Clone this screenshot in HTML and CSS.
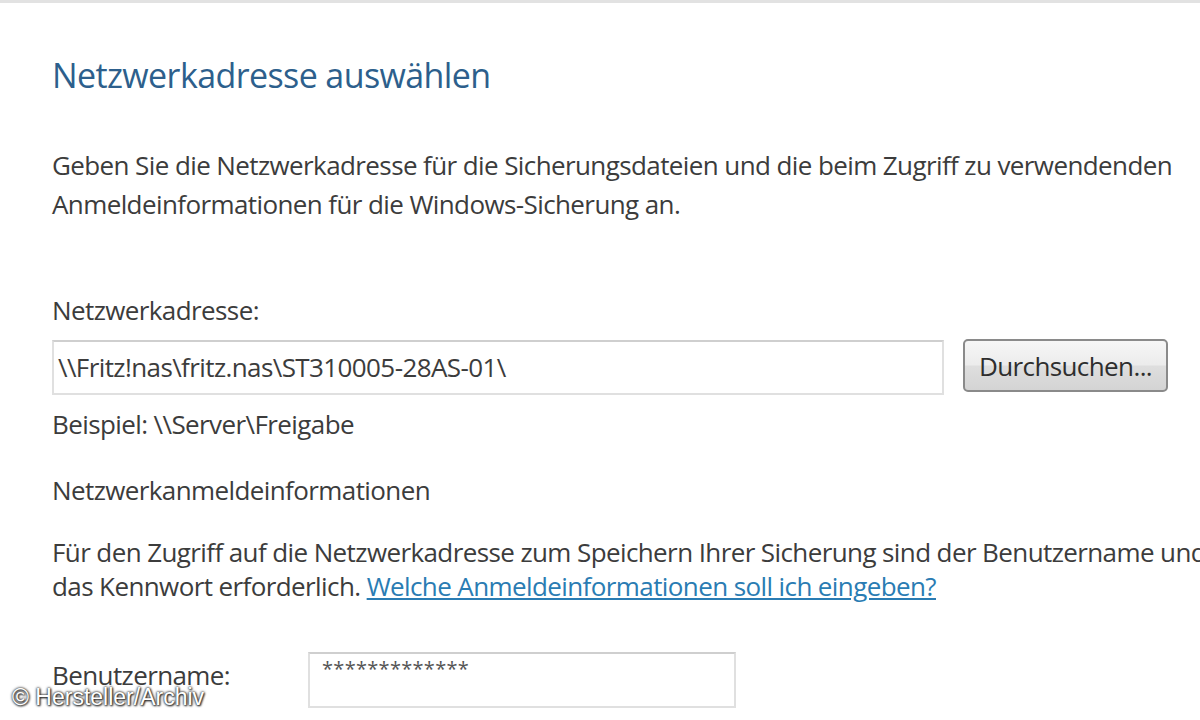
FILE: index.html
```html
<!DOCTYPE html>
<html>
<head>
	<meta charset="utf-8">
	<title>Netzwerkadresse auswählen</title>
	<link rel="stylesheet" href="styles.css">
</head>
<body>
	<div class="top-line"></div>
	<div class="page">
		<h1 class="title">Netzwerkadresse auswählen</h1>
		<p class="intro">Geben Sie die Netzwerkadresse für die Sicherungsdateien und die beim Zugriff zu verwendenden<br>Anmeldeinformationen für die Windows-Sicherung an.</p>

		<div class="label">Netzwerkadresse:</div>
		<div class="address-row">
			<div class="text-box address-box">\\Fritz!nas\fritz.nas\ST310005-28AS-01\</div>
			<button class="browse">Durchsuchen...</button>
		</div>
		<div class="hint">Beispiel: \\Server\Freigabe</div>

		<div class="section">Netzwerkanmeldeinformationen</div>
		<p class="creds">Für den Zugriff auf die Netzwerkadresse zum Speichern Ihrer Sicherung sind der Benutzername und<br>das Kennwort erforderlich. <a href="#" class="link">Welche Anmeldeinformationen soll ich eingeben?</a></p>

		<div class="user-row">
			<div class="user-label">Benutzername:</div>
			<div class="text-box user-box">*************</div>
		</div>
	</div>
	<div class="watermark">© Hersteller/Archiv</div>
</body>
</html>
```

FILE: styles.css
```css
html, body {
	margin: 0;
	padding: 0;
	background: #ffffff;
	overflow: hidden;
	width: 1200px;
	height: 720px;
}
body {
	font-family: "Open Sans", "Noto Sans", sans-serif;
	font-size: 26px;
	letter-spacing: -0.6px;
	color: #3c3c3c;
}
.top-line {
	height: 3px;
	background: #e2e2e2;
}
.page {
	padding-left: 52px;
	white-space: nowrap;
}
.title {
	margin: 52px 0 0 0;
	font-size: 34px;
	font-weight: 400;
	line-height: 40px;
	color: #2d5f8c;
	letter-spacing: -0.6px;
}
.intro {
	margin: 51px 0 0 0;
	line-height: 39px;
}
.label {
	margin-top: 67px;
	line-height: 38px;
}
.address-row {
	display: flex;
	align-items: flex-start;
	margin-top: 11px;
}
.text-box {
	box-sizing: border-box;
	border: 2px solid #e0e0e0;
	border-top-color: #cfcfcf;
	background: #ffffff;
}
.address-box {
	width: 892px;
	height: 55px;
	line-height: 50px;
	padding-left: 4px;
}
.browse {
	box-sizing: border-box;
	margin: -1px 0 0 19px;
	width: 205px;
	height: 53px;
	border: 2px solid #8a8a8a;
	border-radius: 5px;
	background: linear-gradient(#f6f6f6, #ececec 48%, #dedede 52%, #d4d4d4);
	font-family: "Open Sans", "Noto Sans", sans-serif;
	font-size: 26px;
	letter-spacing: -0.6px;
	color: #2e2e2e;
	padding: 0;
}
.hint {
	margin-top: 10px;
	line-height: 38px;
}
.section {
	margin-top: 28px;
	line-height: 38px;
}
.creds {
	margin: 26px 0 0 0;
	line-height: 34px;
}
.link {
	color: #2a7cb3;
	text-decoration: underline;
}
.user-row {
	display: flex;
	align-items: flex-start;
	margin-top: 49px;
}
.user-label {
	width: 256px;
	line-height: 38px;
	margin-top: 4px;
}
.user-box {
	width: 428px;
	height: 56px;
	font-size: 20px;
	line-height: 30px;
	padding-left: 12px;
	color: #555555;
	letter-spacing: 0.3px;
}
.watermark {
	position: absolute;
	left: 12px;
	top: 684px;
	font-family: "Liberation Sans", Arial, sans-serif;
	font-size: 23px;
	letter-spacing: 0;
	color: #ffffff;
	text-shadow: 0 0 2px #333, 0 0 3px #333, 1px 1px 2px #222;
}
```
